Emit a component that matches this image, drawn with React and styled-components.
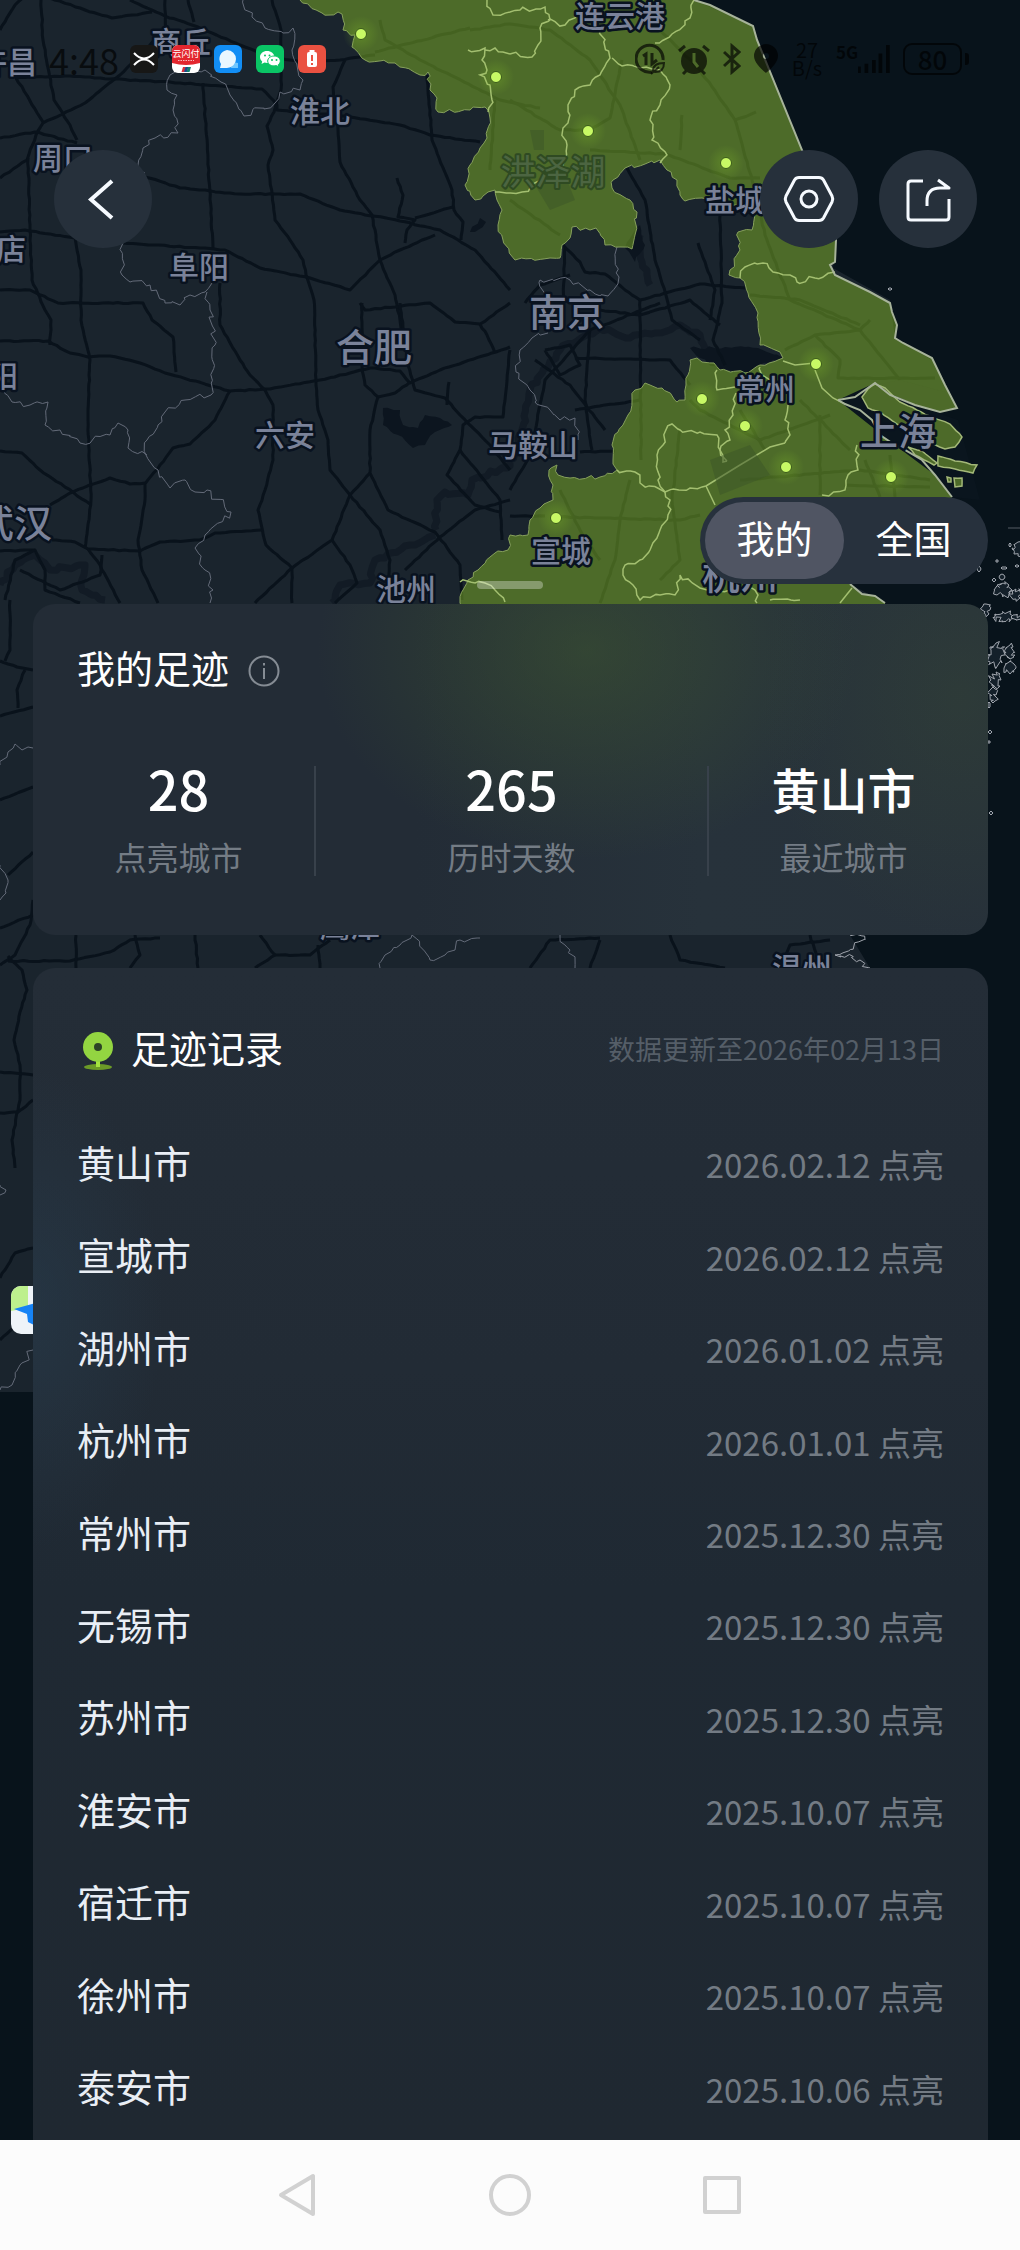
import React from "react";
import styled, { createGlobalStyle } from "styled-components";

const GlobalStyle = createGlobalStyle`
  *, *::before, *::after { box-sizing: border-box; }
  html, body { margin: 0; background: #08131b; }
  body { font-family: "Noto Sans CJK SC", "Noto Sans", sans-serif; color: #fff; }
  button { font: inherit; color: inherit; border: 0; padding: 0; background: none; cursor: pointer; }
  h2, p, ul, dl, dd { margin: 0; padding: 0; }
  ul { list-style: none; }
`;

/* ---------- map geometry ---------- */

function makeRandom(seed) {
  let s = seed;
  return () => {
    s = (s * 16807) % 2147483647;
    return s / 2147483647 - 0.5;
  };
}

// Splits every leg of a polyline into short steps and shakes them, like a surveyed border.
function rough(points, amp = 4, closed = false, seed = 7, step = 5) {
  const rnd = makeRandom(seed * 131 + Math.abs(Math.round(points[0][0] * 17 + points[0][1] * 3)) + 1);
  const list = closed ? [...points, points[0]] : points;
  let d = `M${list[0][0]} ${list[0][1]}`;
  for (let i = 1; i < list.length; i += 1) {
    const [x0, y0] = list[i - 1];
    const [x1, y1] = list[i];
    const steps = Math.max(1, Math.round(Math.hypot(x1 - x0, y1 - y0) / step));
    for (let k = 1; k < steps; k += 1) {
      const t = k / steps;
      d += `L${(x0 + (x1 - x0) * t + rnd() * amp).toFixed(1)} ${(y0 + (y1 - y0) * t + rnd() * amp).toFixed(1)}`;
    }
    d += `L${x1} ${y1}`;
  }
  return closed ? `${d}Z` : d;
}

const line = (points) => `M${points.map((p) => p.join(" ")).join("L")}`;

const LAND = [[0, 0], [694, 0], [753, 26], [802, 150], [836, 245], [833, 268], [890, 300], [895, 338], [935, 362], [957, 408], [930, 410], [875, 384], [838, 400], [872, 420], [895, 445], [935, 475], [952, 497], [850, 540], [850, 584], [885, 603], [910, 700], [900, 860], [850, 935], [870, 968], [820, 1200], [700, 1392], [0, 1392]];

const LIT_WEST = [[300, 0], [322, 13], [342, 14], [343, 30], [355, 35], [352, 47], [365, 60], [395, 63], [420, 75], [428, 72], [430, 90], [437, 98], [438, 112], [470, 110], [485, 107], [490, 118], [487, 138], [480, 148], [470, 165], [465, 185], [475, 200], [488, 192], [495, 190], [497, 200], [502, 210], [498, 225], [503, 240], [515, 260], [550, 258], [560, 258], [562, 245], [570, 238], [572, 227], [590, 230], [596, 228], [605, 245], [620, 247], [632, 249], [636, 225], [637, 212], [630, 200], [612, 188], [613, 180], [625, 168], [645, 164], [660, 160], [667, 170], [677, 180], [680, 195], [685, 201], [702, 198], [735, 205], [755, 212], [752, 230], [738, 232], [740, 250], [730, 270], [729, 275], [740, 278], [748, 293], [758, 313], [760, 345], [780, 352], [783, 358], [760, 365], [745, 373], [720, 370], [714, 363], [702, 362], [697, 358], [690, 360], [688, 375], [686, 385], [685, 400], [677, 402], [662, 388], [650, 385], [645, 383], [635, 390], [632, 400], [628, 415], [618, 432], [612, 445], [613, 460], [617, 470], [600, 477], [570, 478], [558, 475], [557, 465], [549, 470], [553, 485], [553, 500], [540, 508], [530, 520], [528, 535], [520, 535], [510, 535], [508, 550], [495, 553], [478, 570], [468, 580], [463, 590], [460, 603], [462, 640]];
const COAST = [[885, 603], [875, 596], [862, 594], [850, 584]];
const SHANGHAI_COAST = [[952, 497], [935, 475], [922, 460], [905, 450], [895, 445], [880, 435], [872, 420], [860, 410], [845, 404], [838, 400]];
const NANTONG_COAST = [[838, 400], [855, 397], [875, 383], [890, 395], [915, 405], [940, 412], [957, 408], [945, 385], [932, 358], [903, 343], [895, 338], [897, 325], [892, 312], [890, 303], [870, 292], [835, 275], [830, 265], [835, 262], [836, 240], [802, 150], [757, 40], [753, 26], [710, 5], [694, 0]];

const ISLANDS = [
  [[862, 397], [868, 389], [875, 384], [885, 388], [900, 402], [930, 416], [950, 424], [962, 437], [955, 447], [945, 449], [925, 441], [905, 430], [880, 412], [868, 408]],
  [[908, 447], [922, 451], [937, 463], [934, 465], [915, 455]],
  [[938, 456], [955, 461], [977, 465], [973, 473], [955, 469], [938, 466]],
  [[954, 478], [962, 478], [962, 486], [955, 487]],
  [[947, 477], [951, 478], [951, 482], [948, 482]],
];

const LIT_BORDERS = [
  [[487, 0], [493, 15], [510, 12], [520, 10], [545, 7], [550, 20], [540, 28], [538, 45], [532, 57], [510, 54]],
  [[548, 20], [565, 25], [575, 18], [580, 0]],
  [[600, 30], [610, 58], [600, 75], [590, 85], [575, 90], [568, 105], [568, 123], [563, 128], [567, 145], [563, 165], [540, 180], [522, 192], [495, 192]],
  [[612, 58], [622, 66], [640, 68], [660, 70], [670, 85], [660, 105], [650, 120], [652, 140], [667, 155], [660, 163]],
  [[694, 0], [690, 18], [672, 34], [655, 43]],
  [[468, 50], [485, 48], [482, 60], [487, 70], [480, 75], [490, 85], [492, 100], [488, 112]],
  [[510, 54], [495, 48], [485, 50]],
  [[740, 278], [745, 267], [763, 263], [773, 272], [790, 275], [797, 282], [815, 278], [835, 272]],
  [[760, 367], [762, 375], [770, 380]],
  [[717, 370], [717, 390], [735, 387]],
  [[736, 393], [733, 415], [725, 430], [730, 440], [720, 450], [723, 462], [727, 461]],
  [[727, 461], [720, 450], [717, 435], [700, 432], [680, 430], [672, 424], [665, 432], [663, 445], [657, 455], [658, 480], [665, 492], [690, 488], [706, 486]],
  [[785, 443], [790, 435], [785, 420], [788, 405]],
  [[617, 470], [635, 472], [640, 483], [665, 492], [670, 500], [668, 515], [660, 530], [650, 550], [640, 560], [625, 565], [623, 575], [633, 585], [640, 600], [660, 595], [675, 595], [680, 575], [700, 588], [730, 590], [755, 590], [757, 603]],
  [[857, 445], [858, 470], [848, 475], [845, 490], [822, 495]],
  [[770, 600], [800, 600]],
  [[460, 582], [485, 583], [495, 590], [505, 602]],
];
const LIT_SMOOTH = [
  [[783, 361], [795, 365], [815, 363]],
  [[815, 370], [822, 388], [833, 398], [845, 404]],
  [[706, 486], [740, 465], [770, 447], [785, 443]],
  [[706, 486], [715, 505]],
  [[840, 603], [852, 588]],
];

const PROVINCES = [
  [[243, 0], [252, 17], [265, 28], [283, 33], [293, 28], [292, 50], [303, 80], [300, 90], [280, 92], [275, 103], [244, 116], [230, 95], [221, 82], [205, 70], [180, 65], [170, 75], [167, 90], [177, 95], [173, 110], [178, 133], [155, 138], [143, 148], [138, 165], [145, 173]],
  [[123, 243], [122, 275], [130, 282], [150, 285], [165, 303], [180, 305], [190, 295], [205, 292], [212, 283]],
  [[207, 292], [210, 310], [215, 345], [211, 395], [185, 400], [165, 412], [158, 425], [147, 440], [147, 457], [158, 470], [170, 488], [185, 480], [195, 492], [207, 490], [231, 512], [205, 535], [195, 548], [205, 570], [213, 590], [210, 603]],
  [[5, 391], [12, 402], [30, 405], [48, 402], [45, 425], [60, 430], [80, 443], [110, 435], [118, 423], [128, 430], [128, 448], [147, 455]],
  [[617, 247], [619, 277], [608, 296], [590, 290], [570, 280], [540, 280], [545, 298]],
  [[548, 333], [532, 338], [520, 350], [516, 372], [530, 390], [535, 402], [550, 410], [560, 420], [575, 418], [578, 440]],
  [[0, 765], [8, 752], [15, 744], [22, 750], [33, 748]],
  [[0, 865], [8, 880], [6, 893], [0, 900]],
  [[0, 1185], [6, 1190], [0, 1195]],
  [[0, 1390], [12, 1385], [20, 1365], [33, 1350]],
  [[380, 968], [385, 955], [400, 945], [412, 935], [430, 960], [445, 955], [460, 940], [480, 938]],
  [[560, 935], [570, 950], [575, 968]],
];

const ROADS = [
  [[0, 30], [15, 5], [25, -5]], [[50, -2], [85, 10], [112, 18], [152, 12]],
  [[41, 0], [43, 40], [54, 100], [70, 125], [77, 140]],
  [[130, 0], [165, 16], [192, 25], [240, 45], [265, 55], [300, 62], [340, 60], [375, 55]],
  [[188, 0], [194, 22]],
  [[165, 0], [166, 30], [150, 45], [120, 75], [85, 103], [43, 123], [36, 135], [27, 160], [0, 178]],
  [[16, 78], [43, 122]], [[0, 138], [35, 132], [77, 143]],
  [[15, 78], [65, 76], [180, 83], [262, 89], [277, 105], [277, 110], [345, 116], [400, 125], [430, 135], [480, 142]],
  [[203, 83], [208, 160], [213, 248]],
  [[272, 0], [281, 30], [281, 90], [274, 112], [267, 126], [273, 150], [268, 165], [275, 220], [290, 240], [303, 260], [306, 275], [314, 300], [316, 380], [318, 410], [328, 440], [330, 470], [350, 495]],
  [[345, 60], [333, 87], [338, 130], [340, 162], [360, 200], [372, 215], [380, 260], [395, 295], [400, 320], [403, 340]],
  [[427, 75], [432, 140], [452, 190], [454, 210], [463, 222], [461, 240]],
  [[140, 175], [180, 188], [240, 194], [300, 194], [340, 210], [400, 221], [440, 230], [475, 250], [510, 290]],
  [[28, 158], [30, 230], [32, 280], [45, 310], [51, 320], [50, 345]],
  [[0, 341], [48, 341], [70, 353], [88, 357], [110, 356], [140, 363], [165, 373], [230, 391], [270, 389], [320, 380], [350, 373]],
  [[0, 232], [25, 230], [75, 238], [81, 270], [81, 320], [90, 360], [88, 420], [91, 500], [85, 548]],
  [[123, 243], [200, 248], [225, 250], [260, 268], [310, 278], [350, 290], [380, 260], [400, 250], [435, 235]],
  [[0, 290], [30, 290], [58, 303], [143, 303], [152, 320], [173, 337], [176, 372]],
  [[220, 283], [220, 325], [240, 360], [250, 375], [265, 390], [273, 405], [273, 460], [265, 490], [258, 510], [266, 545], [292, 568], [292, 603]],
  [[397, 178], [403, 195], [398, 217], [415, 220], [407, 230], [405, 243]], [[415, 218], [453, 207]],
  [[230, 391], [215, 420], [205, 430], [190, 444], [173, 448], [160, 465], [145, 484], [145, 500], [138, 540], [142, 570], [158, 603]],
  [[0, 451], [22, 453], [40, 470], [90, 504]], [[50, 505], [70, 493], [110, 478], [130, 484], [145, 483]],
  [[52, 540], [75, 542], [88, 549], [140, 551], [160, 542], [200, 540], [215, 533], [262, 530]],
  [[88, 549], [100, 565], [120, 603]], [[0, 551], [35, 550], [45, 570], [45, 590], [80, 603]], [[5, 600], [15, 560], [35, 550]], [[20, 570], [60, 590], [100, 575], [102, 555]],
  [[360, 303], [365, 310], [420, 304], [430, 303], [455, 322], [480, 324], [510, 303]], [[480, 324], [487, 335], [495, 353]],
  [[362, 303], [362, 366]],
  [[400, 303], [408, 365], [415, 390], [445, 398], [460, 415], [490, 445], [510, 470]],
  [[350, 373], [370, 368], [400, 371], [410, 383], [440, 370], [510, 347]],
  [[362, 366], [365, 385], [378, 397], [395, 393], [410, 382]],
  [[378, 397], [370, 430], [370, 473], [388, 510], [435, 532], [460, 565], [462, 600]],
  [[370, 473], [350, 495], [332, 540], [292, 568], [255, 603]], [[350, 495], [380, 530], [390, 560], [388, 580]],
  [[332, 540], [350, 565], [357, 583], [335, 603]], [[510, 500], [475, 510], [440, 537], [405, 570]],
  [[449, 382], [447, 405]], [[510, 350], [503, 417], [475, 417], [463, 425], [460, 450], [447, 475], [475, 505], [500, 512]], [[460, 450], [480, 475], [500, 500], [502, 540]],
  [[565, 248], [563, 300]], [[563, 245], [580, 262], [585, 272], [605, 274], [625, 290], [640, 300], [665, 293], [700, 284], [745, 288]],
  [[627, 168], [645, 200], [655, 260], [668, 303], [672, 320], [700, 340]], [[720, 215], [722, 303], [713, 340], [725, 365]],
  [[698, 243], [715, 290], [710, 320]], [[525, 303], [540, 285], [570, 275]], [[640, 300], [641, 460]],
  [[575, 358], [670, 360], [690, 385]], [[580, 452], [615, 451]], [[510, 516], [545, 516]], [[590, 330], [585, 400], [592, 450]],
  [[535, 360], [570, 385], [605, 430]], [[600, 310], [640, 315], [690, 300], [720, 325]],
  [[510, 490], [530, 455], [545, 380], [590, 330], [660, 303]], [[575, 410], [640, 400]], [[545, 350], [560, 375], [580, 365], [570, 345], [545, 350]],
  [[470, 30], [510, 24], [550, 30], [590, 60], [620, 105], [640, 160]], [[380, 20], [385, 40], [420, 60], [500, 100], [540, 108]],
  [[375, 52], [470, 28]], [[495, 100], [490, 170]], [[660, 30], [700, 70], [735, 120], [755, 190], [765, 235], [790, 300]],
  [[510, 100], [560, 130], [590, 130], [610, 118], [622, 60]], [[590, 150], [665, 154], [730, 178], [760, 178]],
  [[682, 115], [680, 150]], [[510, 200], [560, 235]], [[735, 120], [756, 112]], [[790, 300], [860, 330], [900, 380]],
  [[815, 335], [840, 360], [838, 378], [935, 378]], [[785, 350], [815, 335], [860, 330], [870, 320]], [[750, 295], [800, 300], [860, 325]],
  [[630, 480], [620, 520], [615, 560], [600, 603]], [[560, 517], [680, 520], [700, 515]], [[690, 400], [700, 410], [760, 440], [830, 415]],
  [[680, 430], [672, 500], [680, 560], [660, 580]], [[740, 480], [860, 470], [930, 480]], [[800, 400], [830, 430], [850, 450]],
  [[865, 460], [880, 497]], [[890, 455], [895, 497]], [[845, 485], [930, 487]], [[820, 415], [820, 495]], [[740, 410], [765, 450]], [[560, 490], [580, 530], [600, 560]],
  [[0, 661], [17, 667], [33, 670]], [[10, 600], [10, 650], [5, 661]], [[25, 670], [17, 690], [18, 708]], [[0, 716], [33, 707]],
  [[0, 800], [33, 787]], [[8, 875], [33, 852]], [[0, 928], [33, 915]], [[0, 965], [15, 955], [30, 925], [33, 900]],
  [[8, 956], [22, 970], [27, 990], [20, 1012], [14, 1040], [20, 1065], [20, 1100], [12, 1140], [15, 1168]],
  [[8, 961], [70, 961], [110, 952], [130, 940], [160, 938]], [[0, 1072], [33, 1075]], [[0, 1113], [18, 1112], [33, 1100]], [[0, 1278], [15, 1253], [33, 1248]], [[0, 1340], [33, 1310]],
  [[76, 935], [76, 968]], [[135, 935], [140, 955], [130, 968]], [[195, 935], [198, 968]], [[260, 935], [275, 955], [255, 968]], [[275, 955], [310, 955], [330, 940]], [[318, 945], [320, 968]],
  [[530, 968], [550, 940], [600, 938]], [[590, 968], [600, 940]], [[670, 935], [680, 960], [725, 968]], [[780, 968], [790, 945], [830, 940]], [[810, 935], [820, 968]],
];

const RIVERS = [
  [[435, 535], [410, 545], [375, 560], [370, 583], [340, 585], [332, 603]],
  [[436, 530], [437, 500], [445, 492], [468, 495], [472, 480], [510, 466], [522, 430], [530, 390], [560, 350], [600, 328], [630, 338], [655, 333], [680, 325], [700, 335], [710, 360]],
  [[0, 585], [15, 565], [35, 555], [50, 570], [85, 565], [82, 590], [105, 600]],
  [[640, 235], [642, 262], [650, 285]],
];
const LAKES = [
  [[383, 408], [400, 410], [403, 425], [418, 428], [425, 415], [440, 418], [452, 425], [435, 432], [425, 445], [413, 448], [398, 435], [383, 425]],
  [[690, 348], [745, 347], [758, 348], [783, 358], [760, 365], [745, 373], [720, 370], [700, 358]],
  [[470, 232], [480, 218], [486, 222], [478, 230]],
  [[625, 248], [640, 225], [645, 245], [635, 262]],
];

const SHORES = [
  [1018, 549, 6, 7], [1003, 590, 9, 7], [1016, 594, 5, 5], [1003, 617, 10, 4], [1017, 617, 6, 3], [996, 655, 8, 12], [1010, 652, 4, 7],
  [1010, 668, 6, 6], [996, 680, 5, 8], [993, 695, 3, 8], [986, 610, 4, 6], [1004, 568, 3, 1], [997, 561, 1, 1], [979, 569, 2, 3], [1010, 545, 1, 2],
  [994, 580, 2, 2], [1002, 577, 3, 3], [990, 732, 2, 2], [991, 813, 2, 2], [890, 289, 2, 1], [989, 705, 1, 3], [1017, 566, 2, 1], [989, 742, 1, 1],
];
const ellipse = ([cx, cy, rx, ry]) =>
  Array.from({ length: 8 }, (_, i) => [
    Math.round(cx + rx * Math.cos((i * Math.PI) / 4)),
    Math.round(cy + ry * Math.sin((i * Math.PI) / 4)),
  ]);

const LABELS = [
  ["许昌", 7, 62, 30], ["商丘", 181, 42, 30], ["周口", 63, 158, 30], ["驻马店", -19, 249, 30], ["信阳", -12, 376, 30],
  ["阜阳", 199, 267, 30], ["淮北", 320, 111, 30], ["合肥", 374, 347, 38], ["六安", 285, 435, 30], ["武汉", 14, 523, 38],
  ["池州", 406, 589, 30], ["南京", 567, 312, 38], ["马鞍山", 533, 445, 30], ["常州", 765, 389, 30], ["上海", 898, 431, 38],
  ["宣城", 561, 551, 30], ["杭州", 740, 575, 38], ["盐城", 735, 200, 30], ["连云港", 620, 16, 30], ["鹰潭", 350, 926, 30], ["温州", 802, 968, 30],
];

const CITY_DOTS = [[361, 34], [496, 77], [588, 131], [726, 163], [816, 364], [702, 399], [745, 426], [786, 467], [891, 477], [556, 518]];

const MapLayer = styled.div`
  position: absolute;
  inset: 0;
  overflow: hidden;
  background: #08131b;
`;

const MapDrawing = styled.svg`
  display: block;
  width: 100%;
  height: auto;
`;

function FootprintMap() {
  const litOutline = `${rough(LIT_WEST, 4)}L885 640L${line([...COAST, ...SHANGHAI_COAST, ...NANTONG_COAST]).slice(1)}Z`;
  return (
    <MapLayer>
      <MapDrawing viewBox="0 0 1020 1392" role="img" aria-label="足迹地图">
        <defs>
          <radialGradient id="glow">
            <stop offset="0" stopColor="#8ccb2a" stopOpacity="0.28" />
            <stop offset="1" stopColor="#8ccb2a" stopOpacity="0" />
          </radialGradient>
        </defs>
        <path d={line(LAND)} fill="#1a242d" />
        <g fill="none" stroke="#121b25" strokeWidth="7" strokeLinejoin="round">
          {RIVERS.map((r, i) => <path key={i} d={rough(r, 4)} />)}
        </g>
        <g fill="#0c151f">
          {LAKES.map((r, i) => <path key={i} d={rough(r, 3, true)} />)}
        </g>
        <g fill="none" stroke="#09121b" strokeWidth="3" strokeLinejoin="round">
          {ROADS.map((r, i) => <path key={i} d={rough(r, 1)} />)}
        </g>
        <g fill="none" stroke="#646b79" strokeWidth="1">
          {PROVINCES.map((r, i) => <path key={i} d={rough(r, 6)} />)}
        </g>
        <path d={litOutline} fill="#7fb126" fillOpacity="0.5" />
        <path d="M838 400L875 383L915 405L958 420L980 500L952 497L935 475L895 445Z" fill="#0a151e" />
        <path d="M875 385L890 394L915 404L940 411L957 407L945 392L900 380Z" fill="#4d6a29" />
        <g fill="#4d6a29" stroke="#a3b878" strokeWidth="1.5">
          {ISLANDS.map((r, i) => <path key={i} d={rough(r, 1, true)} />)}
        </g>
        <path d={rough(LIT_WEST, 4)} fill="none" stroke="#86a05c" strokeWidth="1" />
        <g fill="none" stroke="#a3bf70" strokeWidth="1.5">
          {LIT_BORDERS.map((r, i) => <path key={i} d={rough(r, 5)} />)}
          {LIT_SMOOTH.map((r, i) => <path key={i} d={line(r)} />)}
        </g>
        <g fill="none" stroke="#a7b39a" strokeWidth="2">
          <path d={line(NANTONG_COAST)} />
          <path d={line(SHANGHAI_COAST)} />
          <path d={line(COAST)} />
        </g>
        <g fill="#14202a" stroke="#a0a5ad" strokeWidth="1">
          {SHORES.map((s, i) => <path key={i} d={rough(ellipse(s), 7, true, i + 2, 2)} />)}
          <path d={rough([[850, 935], [865, 940], [835, 955], [860, 960], [870, 968]], 6, false, 7, 3)} fill="none" />
          <path d="M1008 528H1020" opacity="0.5" />
        </g>
        <g fill="#3c5527" opacity="0.5">
          <path d="M530 130h14v20h-10z M535 185l30 -10l10 25l-25 10z M710 460l40 -15l20 30l-50 20z" />
        </g>
        <text x="553" y="185" fontSize="35" textAnchor="middle" fill="#4c6541" stroke="#2f4a22" strokeWidth="4" paintOrder="stroke" strokeLinejoin="round">洪泽湖</text>
        <g fill="#7a8299" fontWeight="500" stroke="#09121f" strokeWidth="5" paintOrder="stroke" strokeLinejoin="round" textAnchor="middle">
          {LABELS.map(([name, x, y, size]) => (
            <text key={name} x={x} y={y + Math.round(size * 0.37)} fontSize={size}>{name}</text>
          ))}
        </g>
        {CITY_DOTS.map(([x, y]) => (
          <g key={`${x}-${y}`}>
            <circle cx={x} cy={y} r="18" fill="url(#glow)" />
            <circle cx={x} cy={y} r="5.500" fill="#c8f965" stroke="#3a5a1a" strokeWidth="1" />
          </g>
        ))}
        <g>
          <rect x="11" y="1286" width="48" height="48" rx="10" fill="#eef3f8" />
          <path d="M21 1286H28V1308L11 1311V1296A10 10 0 0 1 21 1286Z" fill="#bdf08d" />
          <path d="M14 1309L50 1299L34 1325L28 1322L27 1314Z" fill="#1683f5" />
        </g>
      </MapDrawing>
    </MapLayer>
  );
}

/* ---------- status bar ---------- */

const StatusBar = styled.header`
  display: flex;
  align-items: center;
  justify-content: space-between;
  height: 118px;
  padding: 0 51px 0 49px;
  color: rgba(0, 0, 0, 0.66);
`;
const StatusGroup = styled.div`
  display: flex;
  align-items: center;
  gap: ${(p) => p.$gap}px;
`;
const Clock = styled.time`
  width: 67px;
  font-size: 36px;
  line-height: 40px;
`;
const AppIcon = styled.svg`
  display: block;
  width: 28px;
  height: 28px;
`;
const StatusIcon = styled.svg`
  display: block;
  width: ${(p) => p.$w}px;
  height: 32px;
`;
const NetSpeed = styled.span`
  width: 32px;
  font-size: 20px;
  line-height: 18px;
  text-align: center;
`;
const Signal = styled.span`
  display: flex;
  align-items: flex-start;
  width: 54px;
  font-size: 17px;
  font-weight: 700;
  line-height: 18px;
`;
const Battery = styled.span`
  display: flex;
  align-items: center;
  gap: 3px;
  &::after {
    content: "";
    width: 4px;
    height: 12px;
    border-radius: 0 3px 3px 0;
    background: currentColor;
  }
`;
const BatteryLevel = styled.span`
  width: 59px;
  height: 32px;
  border: 2px solid currentColor;
  border-radius: 9px;
  font-size: 26px;
  font-weight: 500;
  line-height: 27px;
  text-align: center;
`;

function PhoneStatus() {
  return (
    <StatusBar>
      <StatusGroup $gap={14}>
        <Clock>4:48</Clock>
        <AppIcon viewBox="0 0 28 28">
          <rect width="28" height="28" rx="6" fill="#171716" />
          <path d="M4 8q5 5.500 10 5.500t10 -5.500M4 20q5 -5.500 10 -5.500t10 5.500" fill="none" stroke="#fff" strokeWidth="2" />
        </AppIcon>
        <AppIcon viewBox="0 0 28 28">
          <rect width="28" height="28" rx="6" fill="#fff" />
          <path d="M6 0H22A6 6 0 0 1 28 6V18Q14 22 0 18V6A6 6 0 0 1 6 0Z" fill="#e3262e" />
          <text x="14" y="12" fontSize="9" textAnchor="middle" fill="#fff">云闪付</text>
          <path d="M6 15.500H22" stroke="#f6b9bb" strokeDasharray="1.500 1" />
          <path d="M11 22h3l-1.500 5h-3z" fill="#d9303a" /><path d="M13.500 22h3l-1.500 5h-3z" fill="#1d4a8c" /><path d="M16 22h3l-1.500 5h-3z" fill="#12806d" />
        </AppIcon>
        <AppIcon viewBox="0 0 28 28">
          <rect width="28" height="28" rx="6" fill="#128ef5" />
          <path d="M18 17l6 1v5h-7z" fill="#6fc6ff" />
          <path d="M13 5a9 9 0 1 1 0 18H6l1 -4A9 9 0 0 1 13 5Z" fill="#e9f7ff" />
        </AppIcon>
        <AppIcon viewBox="0 0 28 28">
          <rect width="28" height="28" rx="6" fill="#0ac565" />
          <path d="M11 6c4 0 7.500 2.700 7.500 6s-3.500 6-7.500 6l-2.500-.4L5.500 19l.7-2.600C4.800 15.300 4 13.700 4 12c0-3.300 3-6 7-6z" fill="#fff" />
          <path d="M18 11c3.500 0 6.300 2.300 6.300 5 0 1.500-.8 2.800-2 3.700l.5 2.100-2.400-1.200-2.400.3c-3.500 0-6.300-2.200-6.300-4.900s2.800-5 6.300-5z" fill="#fff" stroke="#0ac565" />
          <g fill="#0ac565"><circle cx="9" cy="10.500" r="1" /><circle cx="13.500" cy="10.500" r="1" /><circle cx="16" cy="15" r="1" /><circle cx="20.500" cy="15" r="1" /></g>
        </AppIcon>
        <AppIcon viewBox="0 0 28 28">
          <rect width="28" height="28" rx="6" fill="#ea5141" />
          <rect x="9" y="7" width="10" height="15" rx="2" fill="#fff" /><rect x="11.500" y="5" width="5" height="3" fill="#fff" />
          <path d="M14 10v6M14 18v2" stroke="#ea5141" strokeWidth="2" />
        </AppIcon>
      </StatusGroup>
      <StatusGroup $gap={13}>
        <StatusIcon $w={30} viewBox="0 0 30 32" fill="none" stroke="currentColor" strokeWidth="3">
          <path d="M17 29A13.500 13.500 0 1 1 28 17" />
          <path d="M8 13l3-2v11M17 10v11l5-4" />
          <path d="M18 28q0-8 11-8q0 9-9 9zM16 31l8-7" strokeWidth="2" />
        </StatusIcon>
        <StatusIcon $w={32} viewBox="0 0 32 32">
          <circle cx="16" cy="18" r="13" fill="currentColor" />
          <path d="M1 8l6-5M31 8l-6-5M5 31l3-3M27 31l-3-3" stroke="currentColor" strokeWidth="3" />
          <path d="M16 10v9l4 5" fill="none" stroke="#4d6a29" strokeWidth="3" />
        </StatusIcon>
        <StatusIcon $w={18} viewBox="0 0 18 32" fill="none" stroke="currentColor" strokeWidth="3">
          <path d="M1 9l15 14-7 6V3l7 6L1 23" />
        </StatusIcon>
        <StatusIcon $w={24} viewBox="0 0 24 32">
          <path d="M12 1a12 12 0 0 1 12 12c0 8-12 17-12 17S0 21 0 13A12 12 0 0 1 12 1zm0 9a3 3 0 1 0 0 6 3 3 0 0 0 0-6z" fill="currentColor" />
        </StatusIcon>
        <NetSpeed>27 B/s</NetSpeed>
        <Signal>
          5G
          <StatusIcon $w={34} viewBox="0 0 34 32" fill="currentColor">
            <path d="M0 24h3v7h-3zM7 21h4v10h-4zM15 17h4v14h-4zM22 10h4v21h-4zM30 1h4v30h-4z" />
          </StatusIcon>
        </Signal>
        <Battery><BatteryLevel>80</BatteryLevel></Battery>
      </StatusGroup>
    </StatusBar>
  );
}

/* ---------- page chrome ---------- */

const Screen = styled.div`
  position: relative;
  display: flex;
  flex-direction: column;
  min-height: 100vh;
  overflow: hidden;
`;
const Content = styled.main`
  position: relative;
  display: flex;
  flex: 1;
  flex-direction: column;
`;
const TopBar = styled.nav`
  display: flex;
  justify-content: space-between;
  padding: 32px 43px 0 54px;
`;
const TopActions = styled.div`
  display: flex;
  gap: 21px;
`;
const RoundButton = styled.button`
  display: grid;
  place-items: center;
  width: 98px;
  height: 98px;
  border-radius: 50%;
  background: #26303b;
`;
const RoundIcon = styled.svg`
  display: block;
  width: 60px;
  height: 60px;
  fill: none;
  stroke: #f6faff;
  stroke-width: 3;
`;
const Segmented = styled.div`
  display: flex;
  align-self: flex-end;
  margin: 249px 32px 0 0;
  padding: 5px;
  border-radius: 44px;
  background: #27313d;
`;
const Segment = styled.button`
  width: 139px;
  height: 77px;
  padding-bottom: 8px;
  border-radius: 39px;
  background: ${(p) => (p.$active ? "#505563" : "transparent")};
  font-size: 38px;
  line-height: 38px;
`;
const Sheet = styled.div`
  position: relative;
  display: flex;
  flex: 1;
  flex-direction: column;
  gap: 33px;
  margin-top: 20px;
  padding: 0 32px 0 33px;
`;
const Handle = styled.span`
  position: absolute;
  top: -23px;
  left: 50%;
  width: 66px;
  height: 8px;
  margin-left: -33px;
  border-radius: 4px;
  background: rgba(255, 255, 255, 0.32);
`;

/* ---------- cards ---------- */

const SummaryCard = styled.section`
  padding: 40px 10px 59px;
  border-radius: 22px;
  background:
    radial-gradient(ellipse 270px 210px at 58% 14%, rgba(66, 92, 46, 0.48), transparent),
    radial-gradient(ellipse 200px 240px at 97% 28%, rgba(60, 80, 52, 0.3), transparent),
    linear-gradient(90deg, #232c36 40%, #27323b 70%, #27313a);
`;
const RecordCard = styled.section`
  display: flex;
  flex: 1;
  flex-direction: column;
  padding: 56px 44px 6px;
  border-radius: 22px 22px 0 0;
  background:
    radial-gradient(ellipse 130px 240px at 0% 340px, rgba(40, 62, 80, 0.5), transparent),
    linear-gradient(#242d37 0, #222b35 400px, #1f2933 620px, #1f2831 100%);
`;
const CardHeader = styled.div`
  display: flex;
  align-items: center;
  height: 50px;
  padding: 0 ${(p) => p.$inset || 0}px;
`;
const CardTitle = styled.h2`
  padding-bottom: 4px;
  font-size: 38px;
  font-weight: 400;
  line-height: 46px;
`;
const InfoButton = styled.button`
  width: 32px;
  height: 32px;
  margin: 3px 0 0 19px;
`;
const InfoIcon = styled.svg`
  display: block;
  fill: none;
  stroke: #858c94;
  stroke-width: 2;
`;
const Stats = styled.dl`
  display: grid;
  grid-template-columns: 271fr 393fr 271fr;
  margin-top: 72px;
`;
const Stat = styled.div`
  display: flex;
  flex-direction: column-reverse;
  justify-content: space-between;
  height: 110px;
  padding-bottom: 2px;
  text-align: center;
  & + & { border-left: 2px solid #38414b; }
`;
const StatValue = styled.dd`
  font-size: ${(p) => (p.$text ? 48 : 54)}px;
  font-weight: 500;
  line-height: 44px;
`;
const StatLabel = styled.dt`
  color: #747c85;
  font-size: 32px;
  line-height: 36px;
`;
const PinIcon = styled.svg`
  display: block;
  width: 32px;
  height: 40px;
  margin: 6px 17px 0 5px;
`;
const Updated = styled.p`
  margin-left: auto;
  color: #555e68;
  font-size: 27px;
  line-height: 32px;
`;
const RecordList = styled.ul`
  display: flex;
  flex: 1;
  flex-direction: column;
  margin-top: 43px;
`;
const Record = styled.li`
  display: flex;
  flex: 1;
  align-items: center;
  justify-content: space-between;
  min-height: 92px;
`;
const City = styled.span`
  padding-bottom: 3px;
  color: #e9eef5;
  font-size: 38px;
  line-height: 46px;
`;
const LitDate = styled.span`
  padding-top: 2px;
  color: #737b84;
  font-size: 33px;
  line-height: 40px;
`;

/* ---------- system navigation ---------- */

const SystemNav = styled.nav`
  position: relative;
  display: flex;
  justify-content: center;
  align-items: center;
  gap: 164px;
  height: 110px;
  background: #fcfcfc;
`;
const NavButton = styled.button`
  width: 48px;
  height: 48px;
`;
const NavIcon = styled.svg`
  display: block;
  fill: none;
  stroke: #d1d1d1;
  stroke-width: 4;
  stroke-linejoin: round;
`;

const STATS = [
  { label: "点亮城市", value: "28" },
  { label: "历时天数", value: "265" },
  { label: "最近城市", value: "黄山市", text: true },
];

const RECORDS = [
  ["黄山市", "2026.02.12"], ["宣城市", "2026.02.12"], ["湖州市", "2026.01.02"], ["杭州市", "2026.01.01"],
  ["常州市", "2025.12.30"], ["无锡市", "2025.12.30"], ["苏州市", "2025.12.30"], ["淮安市", "2025.10.07"],
  ["宿迁市", "2025.10.07"], ["徐州市", "2025.10.07"], ["泰安市", "2025.10.06"],
];

export default function App() {
  const [scope, setScope] = React.useState("我的");
  return (
    <Screen lang="zh-CN">
      <GlobalStyle />
      <FootprintMap />
      <Content>
        <PhoneStatus />
        <TopBar>
          <RoundButton aria-label="返回">
            <RoundIcon viewBox="0 0 60 60"><path d="M39 12L18 30.500L39 49" strokeWidth="4" /></RoundIcon>
          </RoundButton>
          <TopActions>
            <RoundButton aria-label="设置">
              <RoundIcon viewBox="0 0 60 60" strokeLinejoin="round">
                <path d="M20 8.500H40Q43 8.500 44.500 11L53 27Q54.500 30 53 33L44.500 49Q43 51.500 40 51.500H20Q17 51.500 15.500 49L7 33Q5.500 30 7 27L15.500 11Q17 8.500 20 8.500Z" />
                <circle cx="30" cy="30" r="8" />
              </RoundIcon>
            </RoundButton>
            <RoundButton aria-label="分享">
              <RoundIcon viewBox="0 0 60 60" strokeLinejoin="round" strokeWidth="4">
                <path d="M25 12H13Q10 12 10 15V48Q10 51 13 51H48Q51 51 51 48V30" />
                <path d="M29 37V32Q29 19 42 19H51L40 11" />
              </RoundIcon>
            </RoundButton>
          </TopActions>
        </TopBar>

        <Segmented role="group" aria-label="范围">
          {["我的", "全国"].map((name) => (
            <Segment key={name} $active={scope === name} aria-pressed={scope === name} onClick={() => setScope(name)}>
              {name}
            </Segment>
          ))}
        </Segmented>

        <Sheet>
          <Handle />
          <SummaryCard>
            <CardHeader $inset={34}>
              <CardTitle>我的足迹</CardTitle>
              <InfoButton aria-label="说明">
                <InfoIcon width="32" height="32" viewBox="0 0 32 32">
                  <circle cx="16" cy="16" r="14.500" />
                  <path d="M16 13V24M16 8V10.500" />
                </InfoIcon>
              </InfoButton>
            </CardHeader>
            <Stats>
              {STATS.map((s) => (
                <Stat key={s.label}>
                  <StatLabel>{s.label}</StatLabel>
                  <StatValue $text={s.text}>{s.value}</StatValue>
                </Stat>
              ))}
            </Stats>
          </SummaryCard>

          <RecordCard>
            <CardHeader>
              <PinIcon viewBox="0 0 32 40">
                <ellipse cx="16" cy="35" rx="14" ry="3" fill="#6b9a27" />
                <path d="M16 27V35" stroke="#a4e33f" strokeWidth="4" />
                <circle cx="16" cy="15" r="15" fill="#93d541" />
                <circle cx="16" cy="15" r="4" fill="#2c4426" />
              </PinIcon>
              <CardTitle>足迹记录</CardTitle>
              <Updated>数据更新至2026年02月13日</Updated>
            </CardHeader>
            <RecordList>
              {RECORDS.map(([city, date]) => (
                <Record key={city}>
                  <City>{city}</City>
                  <LitDate>{date} 点亮</LitDate>
                </Record>
              ))}
            </RecordList>
          </RecordCard>
        </Sheet>
      </Content>

      <SystemNav aria-label="系统导航">
        <NavButton aria-label="后退">
          <NavIcon width="48" height="48" viewBox="0 0 48 48"><path d="M39 5V43L7 24Z" /></NavIcon>
        </NavButton>
        <NavButton aria-label="主屏幕">
          <NavIcon width="48" height="48" viewBox="0 0 48 48"><circle cx="24" cy="24" r="19" /></NavIcon>
        </NavButton>
        <NavButton aria-label="最近任务">
          <NavIcon width="48" height="48" viewBox="0 0 48 48"><rect x="7" y="7" width="34" height="34" /></NavIcon>
        </NavButton>
      </SystemNav>
    </Screen>
  );
}
